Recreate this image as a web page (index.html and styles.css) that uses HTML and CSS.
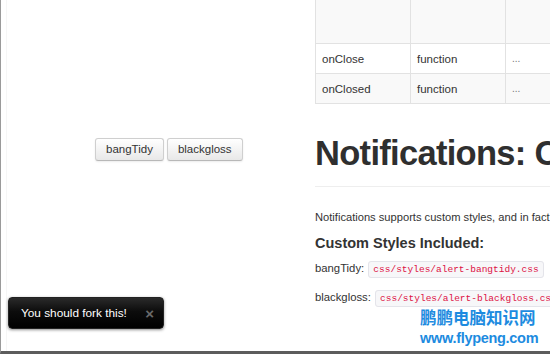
FILE: index.html
```html
<!DOCTYPE html>
<html>
<head>
<meta charset="utf-8">
<link rel="stylesheet" href="styles.css">
</head>
<body>
<div class="frame">
  <div class="left">
    <div class="btns">
      <button class="btn">bangTidy</button>
      <button class="btn">blackgloss</button>
    </div>
  </div>
  <div class="right">
    <table class="tbl">
      <colgroup><col class="c1"><col class="c2"><col class="c3"></colgroup>
      <tr class="r0 striped"><td></td><td></td><td></td></tr>
      <tr class="row"><td>onClose</td><td>function</td><td class="dots">...</td></tr>
      <tr class="row striped"><td>onClosed</td><td>function</td><td class="dots">...</td></tr>
    </table>
    <h1 class="title">Notifications: Custom Styles</h1>
    <hr class="rule">
    <p class="lead">Notifications supports custom styles, and in fact ships with a couple of them.</p>
    <h3 class="sub">Custom Styles Included:</h3>
    <p class="line">bangTidy: <code class="code">css/styles/alert-bangtidy.css</code></p>
    <p class="line">blackgloss: <code class="code">css/styles/alert-blackgloss.css</code></p>
  </div>
</div>
<div class="toast"><span class="toast-text">You should fork this!</span><span class="toast-x">×</span></div>
<div class="mark">
  <div class="mark-cn">鹏鹏电脑知识网</div>
  <div class="mark-url">www.flypeng.com</div>
</div>
</body>
</html>
```
FILE: styles.css
```css
html, body {
  margin: 0;
  padding: 0;
  width: 550px;
  height: 354px;
  overflow: hidden;
  background: #fff;
}
body {
  font-family: "Liberation Sans", Arial, sans-serif;
  font-size: 11.3px;
  color: #333;
  position: relative;
}
.frame {
  display: flex;
  height: 351px;
  border-left: 1px solid #9a9a9a;
  border-bottom: 3px solid #5c5c5c;
  overflow: hidden;
}
.left {
  width: 314px;
  flex: none;
  background: linear-gradient(to right, transparent 5px, #f6f6f6 5px, #f6f6f6 6px, transparent 6px);
}
.btns {
  display: flex;
  gap: 3px;
  padding: 138px 0 0 94px;
}
.btn {
  font-family: "Liberation Sans", Arial, sans-serif;
  font-size: 11.5px;
  line-height: 15px;
  color: #333;
  padding: 3px 10px;
  border: 1px solid #cfcfcf;
  border-bottom-color: #b8b8b8;
  border-radius: 3px;
  background: linear-gradient(#ffffff, #e8e8e8);
  box-shadow: 0 1px 2px rgba(0,0,0,0.08);
  margin: 0;
}
.right {
  flex: 1;
  min-width: 0;
  overflow: hidden;
}
.tbl {
  border-collapse: collapse;
  width: 330px;
  table-layout: fixed;
  border-left: 1px solid #e2e2e2;
  border-bottom: 1px solid #e2e2e2;
  font-size: 11.5px;
}
.c1 { width: 95px; }
.c2 { width: 95px; }
.c3 { width: 140px; }
.tbl td {
  border-top: 1px solid #e2e2e2;
  border-left: 1px solid #e2e2e2;
  padding: 0 6px;
  text-align: left;
  white-space: nowrap;
}
.tbl .r0 td {
  height: 43px;
  border-top: none;
}
.tbl .row td {
  height: 29px;
}
.striped td { background: #f9f9f9; }
.dots { color: #777; font-size: 10px; }
.title {
  margin: 28px 0 0;
  font-size: 34.5px;
  line-height: 42px;
  font-weight: bold;
  color: #2f2f2f;
  letter-spacing: -0.7px;
  white-space: nowrap;
}
.rule {
  margin: 12px 0 0;
  border: none;
  border-top: 1px solid #eeeeee;
  height: 0;
  width: 300px;
}
.lead {
  margin: 22px 0 0;
  line-height: 17px;
  font-size: 11.15px;
  white-space: nowrap;
}
.sub {
  margin: 7px 0 0;
  font-size: 14.5px;
  line-height: 20px;
  font-weight: bold;
  color: #333;
  white-space: nowrap;
}
.line {
  margin: 5px 0 7px;
  line-height: 20px;
  white-space: nowrap;
}
.line + .line { margin-top: 0; }
.code {
  font-family: "Liberation Mono", "DejaVu Sans Mono", monospace;
  font-size: 9.5px;
  color: #d14;
  background: #f7f7f9;
  border: 1px solid #e4e4ea;
  border-radius: 3px;
  padding: 2px 4px;
  margin-left: 1px;
}
.toast {
  position: absolute;
  left: 8px;
  top: 297px;
  width: 156px;
  height: 32px;
  box-sizing: border-box;
  display: flex;
  align-items: center;
  justify-content: space-between;
  padding: 0 9px 0 12px;
  border: 1px solid #222;
  border-radius: 4px;
  background: linear-gradient(#2a2a2a 0%, #0c0c0c 45%, #000 100%);
  box-shadow: 0 1px 3px rgba(0,0,0,0.45);
  color: #fff;
  font-size: 11.8px;
}
.toast-x {
  color: #6a6a6a;
  font-weight: bold;
  font-size: 15px;
  line-height: 1;
}
.mark {
  position: absolute;
  left: 420px;
  top: 305px;
  color: #1d8be0;
  font-family: "Liberation Sans", "Noto Sans CJK SC", sans-serif;
}
.mark-cn {
  font-family: "Noto Sans CJK SC", sans-serif;
  font-size: 16.5px;
  line-height: 24px;
  font-weight: bold;
}
.mark-url {
  font-size: 14.5px;
  line-height: 18px;
  font-weight: bold;
  letter-spacing: -0.3px;
}
```
